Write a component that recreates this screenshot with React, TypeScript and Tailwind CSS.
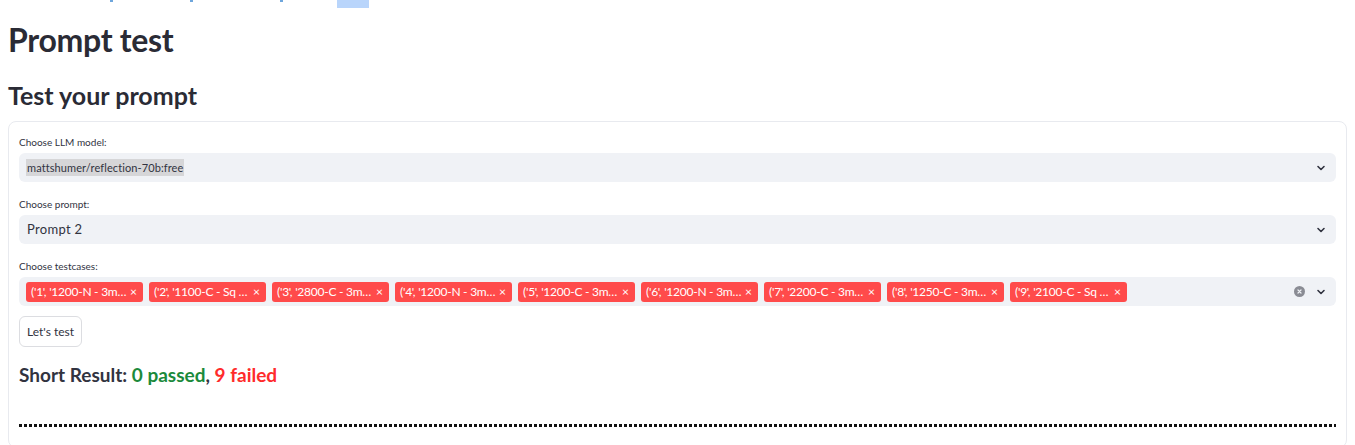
import React from "react";

const tags = [
  "('1', '1200-N - 3m…",
  "('2', '1100-C - Sq …",
  "('3', '2800-C - 3m…",
  "('4', '1200-N - 3m…",
  "('5', '1200-C - 3m…",
  "('6', '1200-N - 3m…",
  "('7', '2200-C - 3m…",
  "('8', '1250-C - 3m…",
  "('9', '2100-C - Sq …",
];

function Chevron() {
  return (
    <svg width="10" height="10" viewBox="0 0 10 10" className="text-[#31333f]">
      <path d="M2 3.5 L5 6.5 L8 3.5" fill="none" stroke="currentColor" strokeWidth="1.6" strokeLinecap="round" strokeLinejoin="round" />
    </svg>
  );
}

export default function App() {
  return (
    <div className="w-[1355px] h-[445px] overflow-hidden bg-white text-[#31333f] font-['Lato',sans-serif]">
      <div className="flex h-[10px] items-start">
        <span className="ml-[110px] w-[3px] h-[2px] bg-[#6fa6dc]" />
        <span className="ml-[77px] w-[3px] h-[2px] bg-[#6fa6dc]" />
        <span className="ml-[87px] w-[3px] h-[2px] bg-[#6fa6dc]" />
        <span className="ml-[54px] w-[32px] h-[8px] bg-[#b9d5fb]" />
      </div>
      <h1 className="pl-[8px] mt-[14px] text-[32px] leading-[32px] font-bold tracking-[-0.3px] text-[#2a2b35]">Prompt test</h1>
      <h2 className="pl-[8px] mt-[25px] text-[25px] leading-[28px] font-bold text-[#2a2b35]">Test your prompt</h2>
      <div className="ml-[8px] mr-[8px] mt-[12px] border border-[#e8eaef] rounded-[8px] px-[10px] pt-[14px] pb-[20px]">
        <div className="text-[10px] leading-[12px]">Choose LLM model:</div>
        <div className="mt-[5px] h-[29px] rounded-[6px] bg-[#f0f2f6] flex items-center pl-[7px] pr-[10px]">
          <span className="text-[11px] leading-[17px] bg-[#d6d6d8] px-[1px] tracking-[0.1px]">mattshumer/reflection-70b:free</span>
          <span className="ml-auto"><Chevron /></span>
        </div>
        <div className="mt-[16px] text-[10px] leading-[12px]">Choose prompt:</div>
        <div className="mt-[5px] h-[29px] rounded-[6px] bg-[#f0f2f6] flex items-center pl-[8px] pr-[10px]">
          <span className="text-[13px] leading-[17px] tracking-[0.3px]">Prompt 2</span>
          <span className="ml-auto"><Chevron /></span>
        </div>
        <div className="mt-[16px] text-[10px] leading-[12px]">Choose testcases:</div>
        <div className="mt-[5px] h-[29px] rounded-[6px] bg-[#f0f2f6] flex items-center pl-[7px] pr-[10px] gap-[6px]">
          {tags.map((t) => (
            <span key={t} className="w-[117px] h-[20px] rounded-[3px] bg-[#ff4b4b] text-white text-[12px] flex items-center pl-[5px] pr-[6px] whitespace-nowrap">
              <span className="tracking-[-0.25px]">{t}</span>
              <span className="ml-auto text-[12px] leading-none">×</span>
            </span>
          ))}
          <span className="ml-auto mr-[5px] w-[11px] h-[11px] rounded-full bg-[#8a8c94] flex items-center justify-center">
            <svg width="7" height="7" viewBox="0 0 7 7">
              <path d="M2 2 L5 5 M5 2 L2 5" stroke="#f0f2f6" strokeWidth="1.2" strokeLinecap="round" />
            </svg>
          </span>
          <Chevron />
        </div>
        <button className="mt-[10px] h-[31px] px-[7px] rounded-[6px] border border-[#dcdde1] bg-white text-[12px] text-[#31333f]">Let's test</button>
        <div className="mt-[16px] text-[19px] leading-[24px] font-bold">
          Short Result: <span className="text-[#1b8a3b]">0 passed</span>, <span className="text-[#ff2b2b]">9 failed</span>
        </div>
        <div className="mt-[37px] h-[3px] bg-[repeating-linear-gradient(to_right,#111_0px,#111_3px,transparent_3px,transparent_5px)]" />
      </div>
    </div>
  );
}
